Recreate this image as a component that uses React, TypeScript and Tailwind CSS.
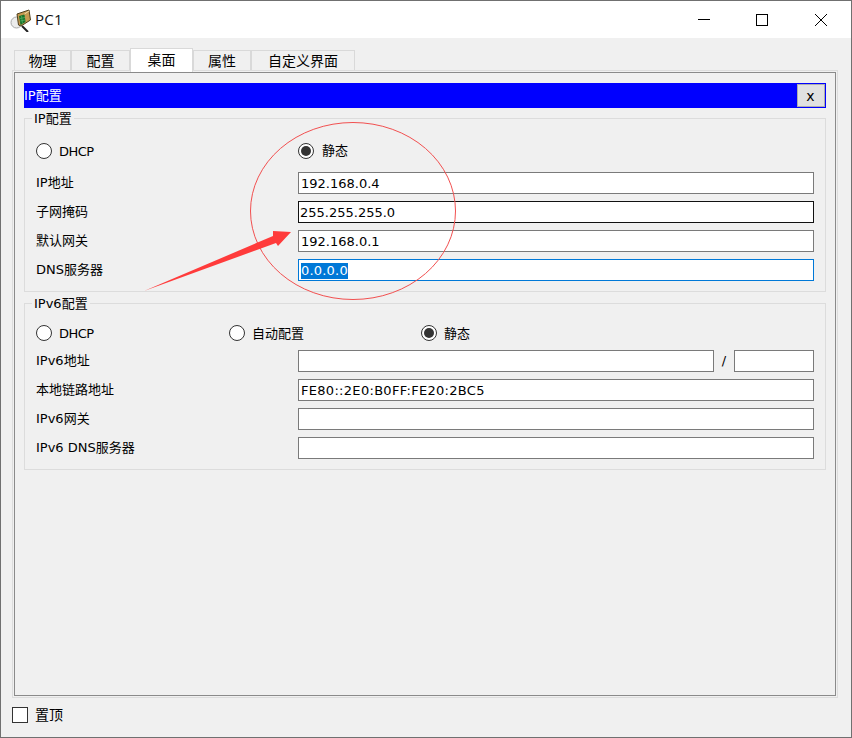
import React from "react";

const fontStack = "font-['DejaVu_Sans','Noto_Sans_CJK_SC',sans-serif]";

const Radio = ({ checked = false }: { checked?: boolean }) => (
  <span className="w-4 h-4 rounded-full border border-[#333] bg-white flex items-center justify-center shrink-0">
    {checked && <span className="w-[10px] h-[10px] rounded-full bg-[#333]" />}
  </span>
);

const RadioItem = ({ label, checked, className, textClass }: { label: string; checked?: boolean; className?: string; textClass?: string }) => (
  <div className={`flex items-center gap-[7px] ${className ?? ""}`}>
    <Radio checked={checked} />
    <span className={`text-[13px] leading-none ${textClass ?? ""}`}>{label}</span>
  </div>
);

const Field = ({ value, border = "border-[#7a7a7a]", className = "" }: { value?: React.ReactNode; border?: string; className?: string }) => (
  <div className={`h-[22px] bg-white border ${border} pl-[2px] pt-px text-[13px] leading-5 whitespace-nowrap ${className}`}>
    {value}
  </div>
);

const Row = ({ label, children }: { label: string; children: React.ReactNode }) => (
  <div className="flex items-center h-[22px]">
    <span className="w-[262px] shrink-0 pb-px text-[13px] leading-none">{label}</span>
    {children}
  </div>
);

const Group = ({ title, className, children }: { title: string; className: string; children: React.ReactNode }) => (
  <div className={`relative border border-[#dcdcdc] px-[11px] flex flex-col ${className}`}>
    <span className="absolute left-[7px] -top-[8px] bg-[#f0f0f0] px-[2px] text-[13px] leading-4">{title}</span>
    {children}
  </div>
);

const PcIcon = () => (
  <svg width="22" height="24" viewBox="0 0 22 24" className="shrink-0">
    <circle cx="6.5" cy="14.5" r="5.5" fill="#ececec" stroke="#a8a8a8" />
    <path d="M12 18 L18 24" stroke="#222" strokeWidth="2" />
    <path d="M7 6 L19 2 L20.5 12 L11 18 L8.5 17 Z" fill="#c49a52" stroke="#4e3f1c" />
    <path d="M9 8 L14.5 6.5 L15.5 14 L10.5 17 Z" fill="#16742a" />
    <path d="M10 10.5L15 9.5M10.3 13L15.2 12M11.5 8L12.5 15.5" stroke="#58b56a" strokeWidth="0.7" />
    <path d="M14.5 6 L19 3" stroke="#f0dba8" />
  </svg>
);

const tabs = [
  { label: "物理", w: "w-[57px]" },
  { label: "配置", w: "w-[59px]" },
  { label: "桌面", w: "w-[63px]", active: true },
  { label: "属性", w: "w-[58px]" },
  { label: "自定义界面", w: "w-[104px]" },
];

export default function App() {
  return (
    <div className={`relative w-[852px] h-[738px] overflow-hidden bg-[#f0f0f0] border border-[#707070] text-black flex flex-col ${fontStack}`}>
      {/* title bar */}
      <div className="h-[37px] bg-white flex items-center shrink-0">
        <div className="ml-[9px]"><PcIcon /></div>
        <span className="ml-[3px] text-[15px] font-['Open_Sans',sans-serif] text-[#111] tracking-[0.3px]">PC1</span>
        <div className="ml-auto flex items-center">
          <svg width="14" height="14" viewBox="0 0 14 14" className="mr-[44px]"><path d="M1 6.5H13" stroke="#000" /></svg>
          <svg width="14" height="14" viewBox="0 0 14 14" className="mr-[45px]"><rect x="1.5" y="1.5" width="11" height="11" fill="none" stroke="#000" /></svg>
          <svg width="14" height="14" viewBox="0 0 14 14" className="mr-[23px]"><path d="M1 1L13 13M13 1L1 13" stroke="#000" /></svg>
        </div>
      </div>

      {/* tabs */}
      <div className="h-[32px] pl-[13px] flex items-end shrink-0 relative z-10">
        {tabs.map((t) =>
          t.active ? (
            <div key={t.label} className={`${t.w} h-[24px] pb-[2px] bg-white border border-b-0 border-[#d9d9d9] flex items-center justify-center text-[14px] leading-none -mb-[2px]`}>
              {t.label}
            </div>
          ) : (
            <div key={t.label} className={`${t.w} h-[20px] border border-b-0 border-[#d9d9d9] flex items-center justify-center text-[14px] leading-none`}>
              {t.label}
            </div>
          )
        )}
      </div>

      {/* panel */}
      <div className="ml-[11px] w-[826px] h-[628px] border border-[#dcdcdc] p-px shrink-0">
        <div className="h-full border border-[#8a8a8a] pt-[10px] px-[9px]">
          <div className="h-[25px] bg-[#0000ff] flex items-center justify-between pr-px text-white text-[13px]">
            <span>IP配置</span>
            <div className="w-[28px] h-[23px] bg-[#e1e1e1] border border-[#adadad] flex items-center justify-center text-black text-[14px] leading-none pr-px">x</div>
          </div>

          <Group title="IP配置" className="mt-[10px] h-[174px]">
            <div className="mt-[23px] h-[18px] flex items-center">
              <RadioItem label="DHCP" className="w-[262px]" textClass="tracking-[-0.5px]" />
              <RadioItem label="静态" checked className="gap-[8px]" textClass="pb-px" />
            </div>
            <div className="mt-[12px] flex flex-col gap-[7px]">
              <Row label="IP地址"><Field className="flex-1" value="192.168.0.4" /></Row>
              <Row label="子网掩码"><Field className="flex-1 !pl-px" border="border-[#111]" value="255.255.255.0" /></Row>
              <Row label="默认网关"><Field className="flex-1" value="192.168.0.1" /></Row>
              <Row label="DNS服务器">
                <Field
                  className="flex-1"
                  border="border-[#0078d7]"
                  value={<span className="inline-block bg-[#0078d7] text-white leading-4 tracking-[0.2px]">0.0.0.0</span>}
                />
              </Row>
            </div>
          </Group>

          <Group title="IPv6配置" className="mt-[11px] h-[167px]">
            <div className="mt-[20px] h-[18px] flex items-center">
              <RadioItem label="DHCP" className="w-[193px]" textClass="tracking-[-0.5px]" />
              <RadioItem label="自动配置" className="w-[192px]" />
              <RadioItem label="静态" checked />
            </div>
            <div className="mt-[8px] flex flex-col gap-[7px]">
              <Row label="IPv6地址">
                <Field className="w-[416px]" />
                <span className="w-[20px] text-center text-[13px]">/</span>
                <Field className="w-[80px]" />
              </Row>
              <Row label="本地链路地址">
                <Field className="flex-1 tracking-[0.3px]" value="FE80::2E0:B0FF:FE20:2BC5" />
              </Row>
              <Row label="IPv6网关"><Field className="flex-1" /></Row>
              <Row label="IPv6 DNS服务器"><Field className="flex-1" /></Row>
            </div>
          </Group>
        </div>
      </div>

      {/* footer */}
      <div className="flex-1 flex items-center pl-[11px] pb-[6px] gap-[7px]">
        <span className="w-4 h-4 bg-white border border-[#333]" />
        <span className="text-[14px] leading-none">置顶</span>
      </div>

      {/* red annotation */}
      <svg width="852" height="738" viewBox="0 0 852 738" className="absolute -left-px -top-px pointer-events-none">
        <ellipse cx="353" cy="211" rx="102.5" ry="88.5" fill="none" stroke="#f25050" strokeWidth="1" />
        <polygon points="144,291 273,236 273,231 291,232 278,246 276,243" fill="#ff3b3b" />
      </svg>
    </div>
  );
}
